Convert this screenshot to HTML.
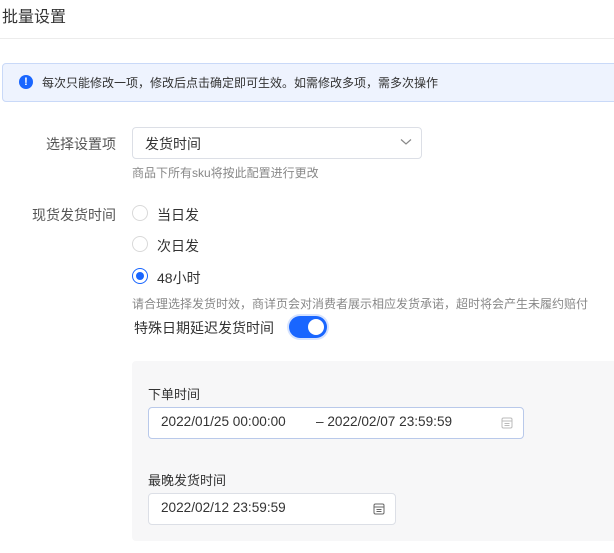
<!DOCTYPE html>
<html><head><meta charset="utf-8"><style>
*{box-sizing:border-box;margin:0;padding:0}
body{width:614px;height:553px;overflow:hidden;background:#fff;font-family:"Liberation Sans","Noto Sans CJK SC",sans-serif;color:#333;position:relative}
.a{position:absolute;white-space:nowrap}
.radio{position:absolute;width:16px;height:16px;border:1px solid #d9d9d9;border-radius:50%;background:#fff}
.inp{position:absolute;background:#fff;border:1px solid #dcdfe6;border-radius:4px;font-size:13px;color:#333}
</style></head><body>
<div class="a" style="left:2px;top:3px;font-size:16px;color:#333">批量设置</div>
<div class="a" style="left:0;top:38px;width:614px;height:1px;background:#ececec"></div>
<div class="a" style="left:2px;top:63px;width:620px;height:39px;background:#eef3fe;border:1px solid #c9d9f8;border-radius:4px"></div>
<div class="a" style="left:19px;top:75px;width:14px;height:14px;border-radius:50%;background:#1966ff;color:#fff;font-size:11px;font-weight:bold;text-align:center;line-height:14px">!</div>
<div class="a" style="left:42px;top:74px;font-size:12px;color:#333">每次只能修改一项，修改后点击确定即可生效。如需修改多项，需多次操作</div>
<div class="a" style="left:46px;top:134px;font-size:14px;color:#555">选择设置项</div>
<div class="inp" style="left:132px;top:127px;width:290px;height:32px;border-radius:4px"></div>
<div class="a" style="left:145px;top:134px;font-size:14px">发货时间</div>
<svg class="a" style="left:400px;top:138px" width="12" height="8"><path d="M1 1.5L6 6L11 1.5" stroke="#888" fill="none" stroke-width="1.2"/></svg>
<div class="a" style="left:132px;top:164px;font-size:12px;color:#888">商品下所有sku将按此配置进行更改</div>
<div class="a" style="left:32px;top:205px;font-size:14px;color:#555">现货发货时间</div>
<div class="radio" style="left:132px;top:205px"></div>
<div class="a" style="left:157px;top:205px;font-size:14px">当日发</div>
<div class="radio" style="left:132px;top:236px"></div>
<div class="a" style="left:157px;top:236px;font-size:14px">次日发</div>
<div class="radio" style="left:132px;top:268px;border-color:#1966ff"><div style="position:absolute;left:3px;top:3px;width:8px;height:8px;border-radius:50%;background:#1966ff"></div></div>
<div class="a" style="left:157px;top:268px;font-size:14px">48小时</div>
<div class="a" style="left:132px;top:295px;font-size:12px;color:#888">请合理选择发货时效，商详页会对消费者展示相应发货承诺，超时将会产生未履约赔付</div>
<div class="a" style="left:134px;top:318px;font-size:14px;color:#333">特殊日期延迟发货时间</div>
<div class="a" style="left:289px;top:316px;width:38px;height:22px;border-radius:11px;background:#1966ff;box-shadow:0 0 0 2px #d6e3ff"><div style="position:absolute;right:3px;top:3px;width:16px;height:16px;border-radius:50%;background:#fff"></div></div>
<div class="a" style="left:132px;top:361px;width:490px;height:180px;background:#f7f7f8;border-radius:4px"></div>
<div class="a" style="left:148px;top:384px;font-size:13px;color:#333">下单时间</div>
<div class="inp" style="left:148px;top:407px;width:376px;height:32px;border-color:#b9c9ea"></div>
<div class="a" style="left:161px;top:414px;font-size:13.6px">2022/01/25 00:00:00</div>
<div class="a" style="left:316px;top:414px;font-size:13.6px">– 2022/02/07 23:59:59</div>
<svg class="a" style="left:501px;top:416px" width="12" height="13"><rect x="1" y="2" width="10" height="10" rx="1.5" fill="none" stroke="#bbb"/><path d="M1 5h10M3.5 7.5h5M3.5 9.5h5" stroke="#bbb"/></svg>
<div class="a" style="left:148px;top:470px;font-size:13px;color:#333">最晚发货时间</div>
<div class="inp" style="left:148px;top:493px;width:248px;height:32px"></div>
<div class="a" style="left:161px;top:500px;font-size:13.6px">2022/02/12 23:59:59</div>
<svg class="a" style="left:373px;top:502px" width="12" height="13"><rect x="1" y="2" width="10" height="10" rx="1.5" fill="none" stroke="#666"/><path d="M1 5h10M3.5 7.5h5M3.5 9.5h5" stroke="#666"/></svg>
</body></html>
